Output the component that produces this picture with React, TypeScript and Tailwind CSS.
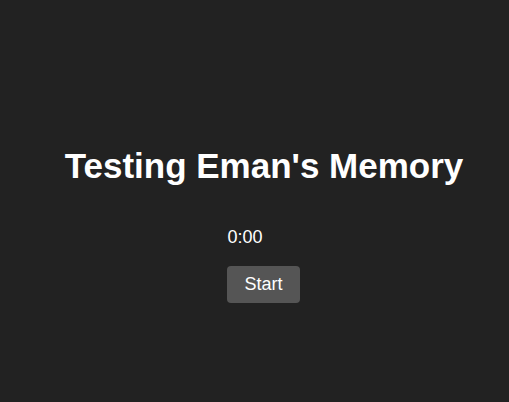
export default function App() {
  return (
    <div className="min-h-screen w-full bg-[#222222] flex flex-col items-center pt-[145px]" style={{ fontFamily: '"Liberation Sans", Arial, sans-serif' }}>
      <h1 className="text-white font-bold text-[35px] leading-[41px] ml-[19px]">Testing Eman's Memory</h1>
      <div className="flex flex-col items-start mt-[41px] ml-[18px]">
        <div className="text-white text-[18px] leading-[21px]">0:00</div>
        <button className="mt-[18px] bg-[#555555] text-white text-[18px] leading-[21px] px-[17px] py-[8px] rounded-[4px]">Start</button>
      </div>
    </div>
  );
}
